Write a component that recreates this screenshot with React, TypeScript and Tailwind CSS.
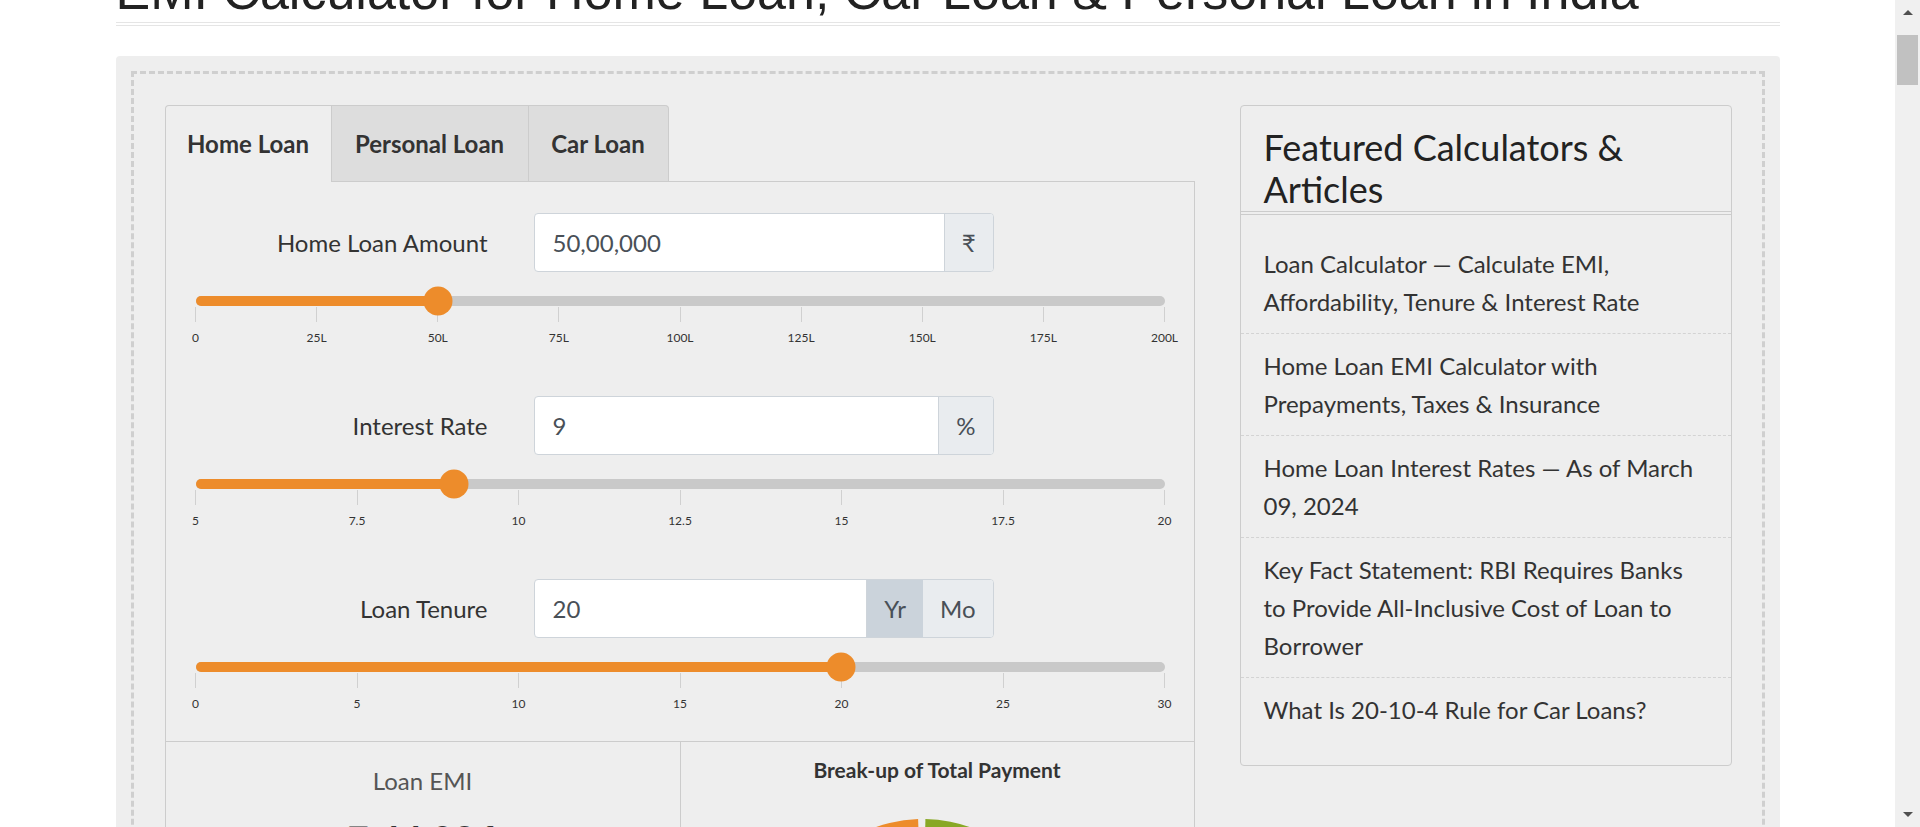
import clsx from "clsx";

const amountTicks = ["0", "25L", "50L", "75L", "100L", "125L", "150L", "175L", "200L"];
const rateTicks = ["5", "7.5", "10", "12.5", "15", "17.5", "20"];
const tenureTicks = ["0", "5", "10", "15", "20", "25", "30"];

const featured = [
  "Loan Calculator — Calculate EMI, Affordability, Tenure & Interest Rate",
  "Home Loan EMI Calculator with Prepayments, Taxes & Insurance",
  "Home Loan Interest Rates — As of March 09, 2024",
  "Key Fact Statement: RBI Requires Banks to Provide All-Inclusive Cost of Loan to Borrower",
  "What Is 20-10-4 Rule for Car Loans?",
];

function Slider({ pct, ticks }: { pct: number; ticks: string[] }) {
  return (
    <div className="pl-[30px] pr-[29px]">
      <div className="relative h-[10px] rounded-full bg-[#c9c9c9]">
        <div className="h-full rounded-full bg-[#ed8c2b]" style={{ width: `${pct}%` }} />
        <div
          className="absolute top-1/2 h-[29px] w-[29px] -translate-x-1/2 -translate-y-1/2 rounded-full bg-[#ed8c2b]"
          style={{ left: `${pct}%` }}
        />
      </div>
      <div className="mt-px flex justify-between">
        {ticks.map((t) => (
          <div key={t} className="flex w-0 flex-col items-center">
            <div className="h-[15px] w-px bg-[#d0d0d0]" />
            <div className="mt-[8px] whitespace-nowrap text-[12px] leading-[15px] text-[#333]">{t}</div>
          </div>
        ))}
      </div>
    </div>
  );
}

type Addon = { text: string; active?: boolean };

function Field({
  label,
  value,
  addons,
  pct,
  ticks,
}: {
  label: string;
  value: string;
  addons: Addon[];
  pct: number;
  ticks: string[];
}) {
  return (
    <div>
      <div className="flex items-center">
        <div className="w-[322px] text-right text-[24px] text-[#333]">{label}</div>
        <div className="ml-[46px] flex h-[59px] w-[460px] overflow-hidden rounded-[4px] border border-[#ced4da] bg-white">
          <div className="flex flex-1 items-center pl-[18px] text-[24px] text-[#495057]">{value}</div>
          {addons.map((a, i) => (
            <div
              key={a.text}
              className={clsx(
                "flex items-center px-[17px] text-[24px] text-[#495057]",
                i === 0 && "border-l border-[#ced4da]",
                a.active ? "bg-[#cbd3db]" : "bg-[#e9ecef]"
              )}
            >
              {a.text}
            </div>
          ))}
        </div>
      </div>
      <div className="mt-[24px]">
        <Slider pct={pct} ticks={ticks} />
      </div>
    </div>
  );
}

function Tabs() {
  return (
    <div className="flex h-[77px] text-[24px] font-bold text-[#333]">
      <div className="flex w-[167px] items-center justify-center rounded-tl-[4px] border-x border-t border-[#ccc] bg-[#eee]">
        Home Loan
      </div>
      <div className="flex w-[197px] items-center justify-center border-y border-r border-[#ccc] bg-[#ddd]">
        Personal Loan
      </div>
      <div className="flex w-[140px] items-center justify-center rounded-tr-[4px] border-y border-r border-[#ccc] bg-[#ddd]">
        Car Loan
      </div>
      <div className="flex-1 border-b border-[#ccc]" />
    </div>
  );
}

function Results() {
  return (
    <div className="flex border-t border-[#ccc]">
      <div className="flex w-[515px] flex-col items-center border-r border-[#ccc] pt-[23px]">
        <div className="text-[24px] leading-[31px] text-[#555]">Loan EMI</div>
        <div className="mt-[24px] text-[38px] font-bold leading-[38px] text-[#333]">₹ 44,986</div>
      </div>
      <div className="flex flex-1 flex-col items-center pt-[14px]">
        <div className="text-[21px] font-bold leading-[28px] text-[#333]">Break-up of Total Payment</div>
        <svg className="mt-[35px]" width="512" height="290" viewBox="0 0 512 290">
          <path d="M242,140 L244.4,0.02 A140,140 0 0 1 275.9,275.8 Z" fill="#88a825" />
          <path d="M242,140 L268.7,277.4 A140,140 0 1 1 237.1,0.1 Z" fill="#ed8c2b" />
        </svg>
      </div>
    </div>
  );
}

function Sidebar() {
  return (
    <div className="w-[492px] self-start rounded-[4px] border border-[#ccc]">
      <h3 className="border-b border-[#ccc] px-[23px] pb-px pt-[20px] text-[36px] font-normal leading-[42px] text-[#222]">
        Featured Calculators &amp; Articles
      </h3>
      <ul className="mt-[2px] border-t border-[#ccc] pb-[24px] pt-[17px]">
        {featured.map((t, i) => (
          <li
            key={t}
            className={clsx(
              "px-[23px] py-[12.5px] text-[24px] leading-[38px] text-[#333]",
              i < featured.length - 1 && "border-b border-dashed border-[#d3d3d3]"
            )}
          >
            {t}
          </li>
        ))}
      </ul>
    </div>
  );
}

function Scrollbar() {
  return (
    <div className="flex w-[25px] flex-col items-center bg-[#f0f0f0]">
      <div className="mt-[10px] h-0 w-0 border-x-[5px] border-b-[5px] border-x-transparent border-b-[#505050]" />
      <div className="mt-[20px] h-[50px] w-[21px] bg-[#c1c1c1]" />
      <div className="flex-1" />
      <div className="mb-[10px] h-0 w-0 border-x-[5px] border-t-[5px] border-x-transparent border-t-[#505050]" />
    </div>
  );
}

export default function App() {
  return (
    <div className="flex h-[827px] overflow-hidden bg-white font-[Lato,'Noto_Sans',sans-serif]">
      <div className="flex-1 overflow-hidden">
        <div className="mx-auto -mt-[37px] w-[1664px]">
          <h1 className="border-b border-[#e5e5e5] pb-[2px] font-['Liberation_Sans',Arial,sans-serif] text-[52px] font-normal leading-[57px] text-[#222]">
            EMI Calculator for Home Loan, Car Loan &amp; Personal Loan in India
          </h1>
          <div className="mt-[2px] h-px bg-[#e5e5e5]" />

          <div className="mt-[30px] rounded-[4px] bg-[#eee] p-[15px]">
            <div className="flex gap-[45px] border-[3px] border-dashed border-[#cfcfcf] pl-[31px] pr-[30px] pt-[31px]">
              <div className="w-[1030px]">
                <Tabs />
                <div className="border-x border-b border-[#ccc]">
                  <div className="flex flex-col gap-[51px] pb-[30px] pt-[31px]">
                    <Field
                      label="Home Loan Amount"
                      value="50,00,000"
                      addons={[{ text: "₹" }]}
                      pct={25}
                      ticks={amountTicks}
                    />
                    <Field
                      label="Interest Rate"
                      value="9"
                      addons={[{ text: "%" }]}
                      pct={(4 / 15) * 100}
                      ticks={rateTicks}
                    />
                    <Field
                      label="Loan Tenure"
                      value="20"
                      addons={[{ text: "Yr", active: true }, { text: "Mo" }]}
                      pct={(20 / 30) * 100}
                      ticks={tenureTicks}
                    />
                  </div>
                  <Results />
                </div>
              </div>
              <Sidebar />
            </div>
          </div>
        </div>
      </div>
      <Scrollbar />
    </div>
  );
}
